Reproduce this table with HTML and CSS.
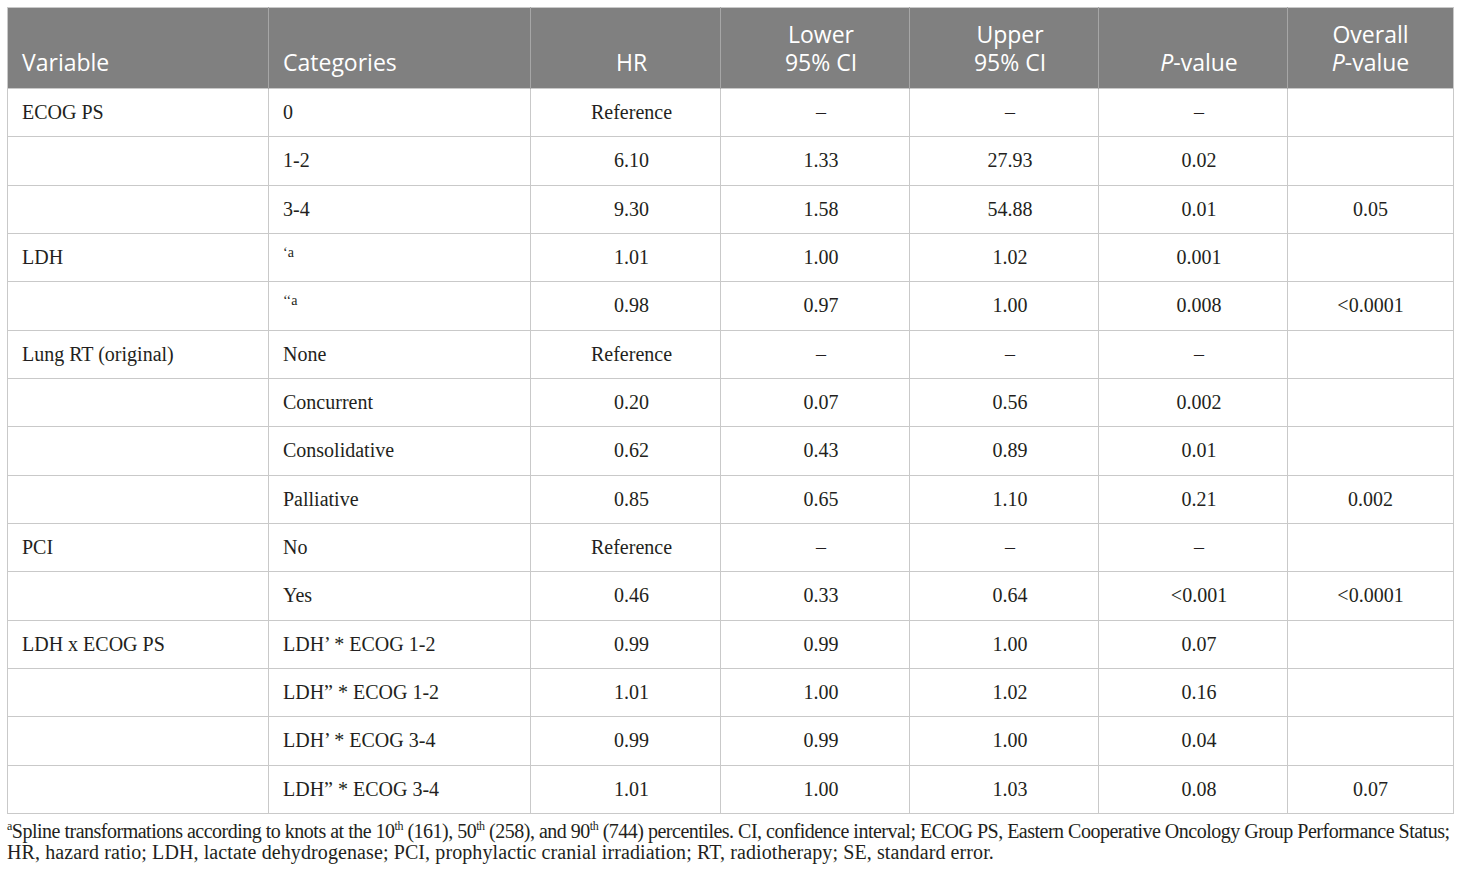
FILE: index.html
```html
<!DOCTYPE html>
<html lang="en">
<head>
    <meta charset="UTF-8">
    <meta name="viewport" content="width=device-width, initial-scale=1.0">
    <title>Hazard Ratio Table</title>
    <link rel="stylesheet" href="styles.css">
</head>
<body>

    <div class="wrap">
        <table class="results">
            <colgroup>
                <col class="c-var">
                <col class="c-cat">
                <col class="c-hr">
                <col class="c-num">
                <col class="c-num">
                <col class="c-num">
                <col class="c-last">
            </colgroup>
            <thead>
                <tr>
                    <th class="left">Variable</th>
                    <th class="left">Categories</th>
                    <th>HR</th>
                    <th>Lower<br>95% CI</th>
                    <th>Upper<br>95% CI</th>
                    <th><i>P</i>-value</th>
                    <th>Overall<br><i>P</i>-value</th>
                </tr>
            </thead>
            <tbody>
                <tr><td class="left">ECOG PS</td><td class="left">0</td><td>Reference</td><td>–</td><td>–</td><td>–</td><td></td></tr>
                <tr><td class="left"></td><td class="left">1-2</td><td>6.10</td><td>1.33</td><td>27.93</td><td>0.02</td><td></td></tr>
                <tr><td class="left"></td><td class="left">3-4</td><td>9.30</td><td>1.58</td><td>54.88</td><td>0.01</td><td>0.05</td></tr>
                <tr><td class="left">LDH</td><td class="left"><span class="tiny">‘a</span></td><td>1.01</td><td>1.00</td><td>1.02</td><td>0.001</td><td></td></tr>
                <tr><td class="left"></td><td class="left"><span class="tiny">‘‘a</span></td><td>0.98</td><td>0.97</td><td>1.00</td><td>0.008</td><td>&lt;0.0001</td></tr>
                <tr><td class="left">Lung RT (original)</td><td class="left">None</td><td>Reference</td><td>–</td><td>–</td><td>–</td><td></td></tr>
                <tr><td class="left"></td><td class="left">Concurrent</td><td>0.20</td><td>0.07</td><td>0.56</td><td>0.002</td><td></td></tr>
                <tr><td class="left"></td><td class="left">Consolidative</td><td>0.62</td><td>0.43</td><td>0.89</td><td>0.01</td><td></td></tr>
                <tr><td class="left"></td><td class="left">Palliative</td><td>0.85</td><td>0.65</td><td>1.10</td><td>0.21</td><td>0.002</td></tr>
                <tr><td class="left">PCI</td><td class="left">No</td><td>Reference</td><td>–</td><td>–</td><td>–</td><td></td></tr>
                <tr><td class="left"></td><td class="left">Yes</td><td>0.46</td><td>0.33</td><td>0.64</td><td>&lt;0.001</td><td>&lt;0.0001</td></tr>
                <tr><td class="left">LDH x ECOG PS</td><td class="left">LDH’ * ECOG 1-2</td><td>0.99</td><td>0.99</td><td>1.00</td><td>0.07</td><td></td></tr>
                <tr><td class="left"></td><td class="left">LDH” * ECOG 1-2</td><td>1.01</td><td>1.00</td><td>1.02</td><td>0.16</td><td></td></tr>
                <tr><td class="left"></td><td class="left">LDH’ * ECOG 3-4</td><td>0.99</td><td>0.99</td><td>1.00</td><td>0.04</td><td></td></tr>
                <tr><td class="left"></td><td class="left">LDH” * ECOG 3-4</td><td>1.01</td><td>1.00</td><td>1.03</td><td>0.08</td><td>0.07</td></tr>
            </tbody>
        </table>

        <p class="note"><span class="line-1"><sup>a</sup>Spline transformations according to knots at the 10<sup>th</sup> (161), 50<sup>th</sup> (258), and 90<sup>th</sup> (744) percentiles. CI, confidence interval; ECOG PS, Eastern Cooperative Oncology Group Performance Status;</span><br><span class="line-2">HR, hazard ratio; LDH, lactate dehydrogenase; PCI, prophylactic cranial irradiation; RT, radiotherapy; SE, standard error.</span></p>
    </div>

</body>
</html>
```

FILE: styles.css
```css
body { margin: 0; background: #fff; color: #231f20; font-family: "Liberation Serif", "Times New Roman", serif; }
.wrap { padding: 7px; width: 1446px; }

.results { width: 1446px; border-collapse: collapse; table-layout: fixed; border: 1px solid #c9c9c9; }
.c-var { width: 261px; }
.c-cat { width: 262px; }
.c-hr { width: 190px; }
.c-num { width: 189px; }
.c-last { width: 166px; }

.results th {
    background: #808080;
    color: #fff;
    font-family: "Open Sans", "Noto Sans", sans-serif;
    font-weight: 400;
    font-size: 23px;
    line-height: 28px;
    height: 81px;
    padding: 0 14px 12px;
    vertical-align: bottom;
    text-align: center;
    border-left: 1px solid #a6a6a6;
    box-sizing: border-box;
}
.results th:first-child { border-left: none; }

.results td {
    height: 48.33px;
    padding: 0 14px;
    font-size: 20px;
    text-align: center;
    border: 1px solid #c9c9c9;
    box-sizing: border-box;
}
.results th:nth-child(n+3):nth-child(-n+6),
.results td:nth-child(n+3):nth-child(-n+6) { padding-left: 20px; padding-right: 8px; }
.results .left { text-align: left; }
.tiny { font-size: 14px; position: relative; top: -7px; }

.note { margin: 7px 0 0; font-size: 20px; line-height: 21px; white-space: nowrap; }
.note .line-1 { letter-spacing: -0.5px; }
.note .line-2 { letter-spacing: 0.1px; }
.note sup { font-size: 12px; line-height: 0; }
```
